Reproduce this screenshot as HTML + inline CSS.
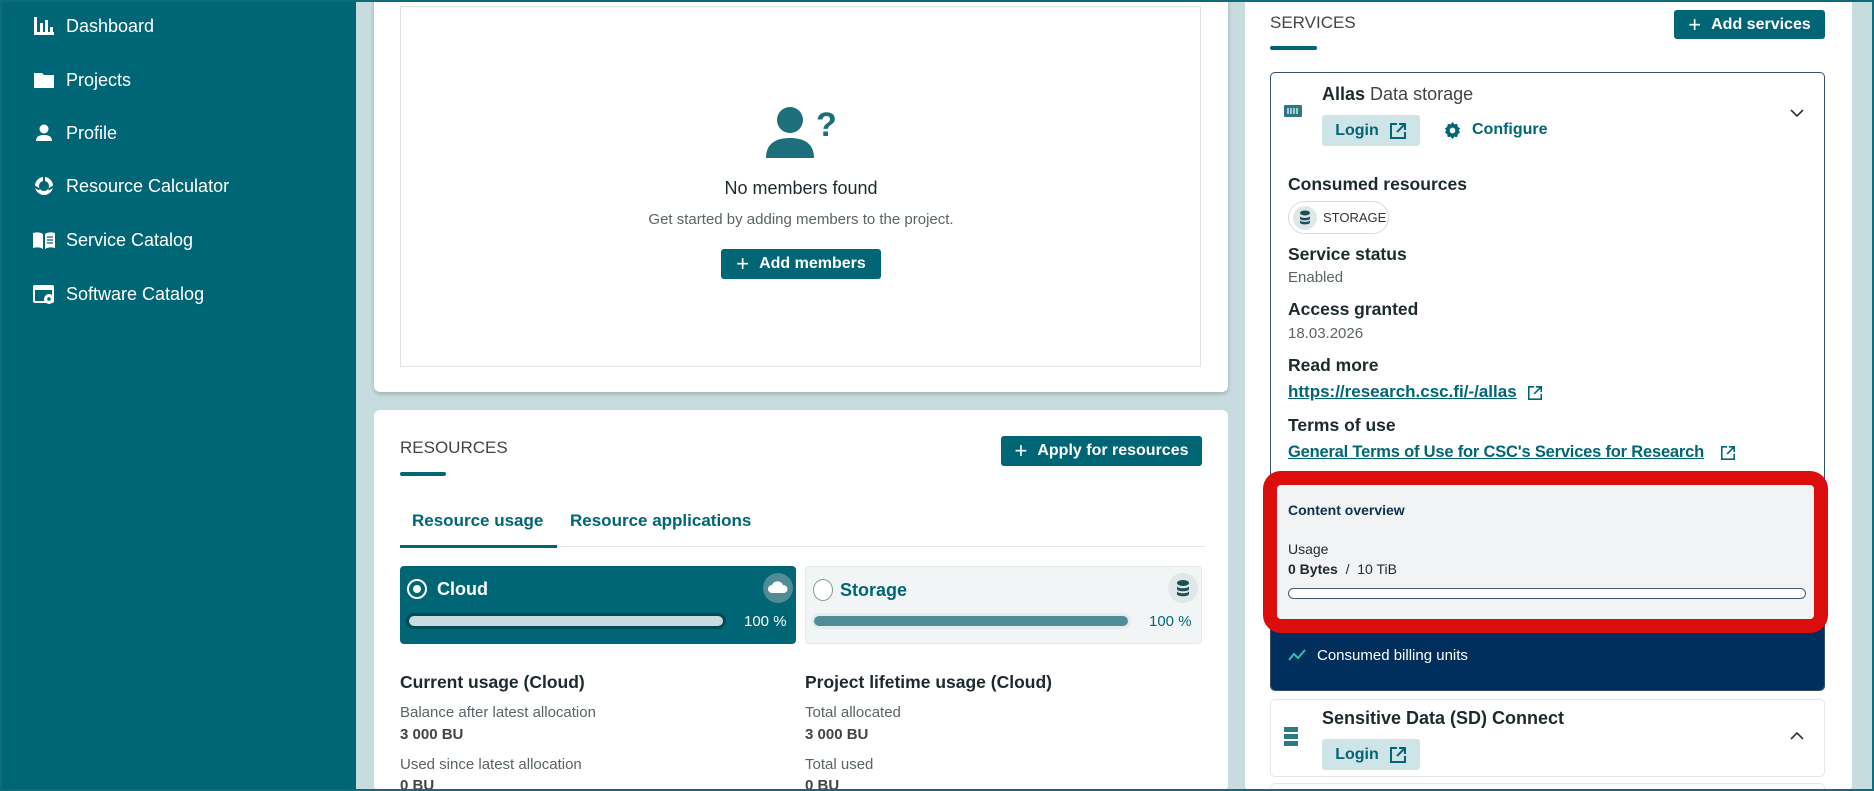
<!DOCTYPE html>
<html style="overflow:hidden;height:791px"><head><meta charset="utf-8"><style>
*{box-sizing:border-box;margin:0;padding:0}
body{width:1874px;height:791px;overflow:hidden;background:#c6dcdf;font-family:"Liberation Sans",sans-serif;position:relative;color:#1c2a2d}
.a{position:absolute}
.t{position:absolute;white-space:nowrap;line-height:20px}
#side{left:0;top:0;width:356px;height:791px;background:#006676}
.nav{position:absolute;left:32px;color:#fff;font-size:18px;display:flex;align-items:center;height:24px}
.nav svg{width:24px;height:22px;margin-right:10px;fill:#fff}
.card{position:absolute;background:#fff;border-radius:6px}
.btn{position:absolute;background:#006676;color:#fff;font-weight:bold;font-size:16px;border-radius:3px;display:flex;align-items:center;justify-content:center;gap:10px}
.btn b{font-size:22px;font-weight:normal;line-height:1}
.h{font-weight:bold;font-size:17.5px;color:#1c2a2d}
.g{font-size:15px;color:#5a6466}
.lk{font-size:17px;color:#006676;text-decoration:underline;font-weight:bold}
.login{position:absolute;background:#cfe4e7;color:#006676;font-weight:bold;font-size:16px;border-radius:3px;display:flex;align-items:center;justify-content:center;gap:10px}
</style></head><body>
<div class="a" style="left:0;top:0;width:1874px;height:791px;border:2px solid #0f6b77;z-index:50;pointer-events:none"></div>
<div id="side" class="a">
 <div class="nav" style="top:14px"><svg viewBox="0 0 24 22"><rect x="2" y="2" width="3" height="18"/><rect x="2" y="17" width="20" height="3"/><rect x="8" y="8" width="3" height="10"/><rect x="13" y="5" width="3" height="13"/><rect x="18" y="12" width="3" height="6"/></svg>Dashboard</div>
 <div class="nav" style="top:68px"><svg viewBox="0 0 24 22"><path d="M2 4h8l2 2h10v13H2z"/></svg>Projects</div>
 <div class="nav" style="top:121px"><svg viewBox="0 0 24 22"><circle cx="12" cy="7" r="4.5"/><path d="M4 19c0-5 4-6 8-6s8 1 8 6z"/></svg>Profile</div>
 <div class="nav" style="top:174px"><svg viewBox="0 0 24 22"><path d="M12 2a9 9 0 1 0 .01 0zm0 4a5 5 0 1 1-.01 0z"/><rect x="11" y="1" width="2" height="6" fill="#006676"/><rect x="2" y="12" width="6" height="2" fill="#006676" transform="rotate(30 5 13)"/><rect x="16" y="12" width="6" height="2" fill="#006676" transform="rotate(-30 19 13)"/></svg>Resource Calculator</div>
 <div class="nav" style="top:228px"><svg viewBox="0 0 24 22"><path d="M1 4c4-1 7-1 10 1v15c-3-2-6-2-10-1z"/><path d="M13 5c3-2 6-2 10-1v15c-4-1-7-1-10 1z"/><path d="M15 8h6M15 11h6M15 14h6" stroke="#006676" stroke-width="1.3"/></svg>Service Catalog</div>
 <div class="nav" style="top:282px"><svg viewBox="0 0 24 22"><rect x="1" y="2" width="21" height="18" rx="2"/><rect x="3" y="7" width="17" height="11" fill="#006676"/><circle cx="17" cy="16" r="5"/><circle cx="17" cy="16" r="1.8" fill="#006676"/></svg>Software Catalog</div>
</div>

<div class="card" style="left:374px;top:-6px;width:854px;height:398px;box-shadow:0 2px 4px rgba(0,0,0,.2)">
 <div class="a" style="left:26px;top:12px;width:801px;height:361px;border:1px solid #dfe3e4"></div>
 <svg class="a" style="left:390px;top:108px" width="76" height="56" viewBox="0 0 76 56"><circle cx="26" cy="18" r="13" fill="#1d6f7c"/><path d="M2 56c0-16 12-20 24-20s24 4 24 20z" fill="#1d6f7c"/><text x="52" y="34" font-size="34" font-weight="bold" fill="#1d6f7c" font-family="Liberation Sans">?</text></svg>
 <div class="t" style="left:0;width:854px;text-align:center;top:184px;font-size:18px">No members found</div>
 <div class="t" style="left:0;width:854px;text-align:center;top:216px;font-size:15px;color:#5a6466">Get started by adding members to the project.</div>
 <div class="btn" style="left:347px;top:255px;width:160px;height:30px"><b>+</b>Add members</div>
</div>

<div class="card" style="left:374px;top:410px;width:854px;height:381px">
 <div class="t" style="left:26px;top:28px;font-size:17px;color:#444">RESOURCES</div>
 <div class="a" style="left:26px;top:62px;width:46px;height:4px;border-radius:2px;background:#006676"></div>
 <div class="btn" style="left:627px;top:26px;width:201px;height:30px"><b>+</b>Apply for resources</div>
 <div class="t" style="left:38px;top:101px;font-size:17px;font-weight:bold;color:#006676">Resource usage</div>
 <div class="t" style="left:196px;top:101px;font-size:17px;font-weight:bold;color:#006676">Resource applications</div>
 <div class="a" style="left:26px;top:136px;width:805px;height:1px;background:#e1e5e6"></div>
 <div class="a" style="left:26px;top:135px;width:157px;height:3px;background:#006676"></div>
 <div class="a" style="left:26px;top:156px;width:396px;height:78px;background:#006676;border-radius:4px">
  <div class="a" style="left:7px;top:13px;width:20px;height:20px;border:2px solid #fff;border-radius:50%"><div class="a" style="left:4px;top:4px;width:8px;height:8px;background:#fff;border-radius:50%"></div></div>
  <div class="t" style="left:37px;top:13px;color:#fff;font-size:18px;font-weight:bold">Cloud</div>
  <div class="a" style="left:363px;top:7px;width:30px;height:30px;border-radius:50%;background:#4f8c96"><svg width="30" height="30" viewBox="0 0 30 30"><path d="M9 20a4 4 0 0 1 0-8 6 6 0 0 1 11 0 4 4 0 0 1 1 8z" fill="#fff"/></svg></div>
  <div class="a" style="left:6px;top:47px;width:320px;height:16px;border-radius:8px;background:#034a55"></div>
  <div class="a" style="left:9px;top:50px;width:314px;height:10px;border-radius:5px;background:#c8dcdf"></div>
  <div class="t" style="left:344px;top:46px;color:#fff;font-size:15px">100 %</div>
 </div>
 <div class="a" style="left:431px;top:156px;width:397px;height:78px;background:#f2f5f6;border:1px solid #e3e8e9;border-radius:4px">
  <div class="a" style="left:7px;top:12px;width:20px;height:22px;border:1px solid #8a9597;border-radius:50%;background:#fff"></div>
  <div class="t" style="left:34px;top:13px;color:#006676;font-size:18px;font-weight:bold">Storage</div>
  <div class="a" style="left:362px;top:6px;width:30px;height:30px;border-radius:50%;background:#dfe7e8"><svg width="30" height="30" viewBox="0 0 30 30"><ellipse cx="15" cy="10" rx="6" ry="3" fill="#1d4f57"/><path d="M9 13c0 3 12 3 12 0v3c0 3-12 3-12 0zM9 18c0 3 12 3 12 0v3c0 3-12 3-12 0z" fill="#1d4f57"/></svg></div>
  <div class="a" style="left:5px;top:46px;width:320px;height:16px;border-radius:8px;background:#e6ebec"></div>
  <div class="a" style="left:8px;top:49px;width:314px;height:10px;border-radius:5px;background:#4f8c96"></div>
  <div class="t" style="left:343px;top:45px;color:#006676;font-size:15px">100 %</div>
 </div>
 <div class="t h" style="left:26px;top:262px">Current usage (Cloud)</div>
 <div class="t h" style="left:431px;top:262px">Project lifetime usage (Cloud)</div>
 <div class="t g" style="left:26px;top:293px">Balance after latest allocation</div>
 <div class="t" style="left:26px;top:315px;font-size:15px;font-weight:bold;color:#444">3 000 BU</div>
 <div class="t g" style="left:26px;top:345px">Used since latest allocation</div>
 <div class="t" style="left:26px;top:366px;font-size:15px;font-weight:bold;color:#444">0 BU</div>
 <div class="t g" style="left:431px;top:293px">Total allocated</div>
 <div class="t" style="left:431px;top:315px;font-size:15px;font-weight:bold;color:#444">3 000 BU</div>
 <div class="t g" style="left:431px;top:345px">Total used</div>
 <div class="t" style="left:431px;top:366px;font-size:15px;font-weight:bold;color:#444">0 BU</div>
</div>

<div class="card" style="left:1245px;top:-6px;width:607px;height:797px;overflow:hidden">
 <div class="t" style="left:25px;top:19px;font-size:17px;color:#444">SERVICES</div>
 <div class="a" style="left:25px;top:52px;width:47px;height:4px;border-radius:2px;background:#006676"></div>
 <div class="btn" style="left:429px;top:16px;width:151px;height:29px"><b>+</b>Add services</div>
 <div class="a" style="left:25px;top:78px;width:555px;height:619px;border:1px solid #34506b;border-radius:5px;overflow:hidden">
  <svg class="a" style="left:12px;top:30px" width="20" height="16" viewBox="0 0 20 16"><rect x="1" y="2" width="18" height="12" rx="1" fill="#2a7a86"/><path d="M5 5v6M8 5v6M11 5v6M14 5v6" stroke="#fff" stroke-width="1.2"/></svg>
  <div class="t" style="left:51px;top:11px;font-size:18px"><b>Allas</b> <span style="color:#444">Data storage</span></div>
  <div class="login" style="left:51px;top:42px;width:98px;height:31px">Login <svg width="18" height="18" viewBox="0 0 18 18" fill="none" stroke="#006676" stroke-width="2"><path d="M8 2H2v14h14v-6M10 2h6v6M16 2L8 10"/></svg></div>
  <svg class="a" style="left:172px;top:48px" width="19" height="19" viewBox="0 0 20 20"><path d="M10 1l2 2.5 3-.5.5 3L18 8l-1.5 2L18 12l-2.5 2-.5 3-3-.5L10 19l-2-2.5-3 .5-.5-3L2 12l1.5-2L2 8l2.5-2 .5-3 3 .5z" fill="#006676"/><circle cx="10" cy="10" r="3" fill="#fff"/></svg>
  <div class="t" style="left:201px;top:47px;font-size:16px;font-weight:bold;color:#006676">Configure</div>
  <svg class="a" style="left:518px;top:34px" width="16" height="12" viewBox="0 0 16 12"><path d="M2 3l6 6 6-6" fill="none" stroke="#333" stroke-width="1.6"/></svg>
  <div class="t h" style="left:17px;top:101px">Consumed resources</div>
  <div class="a" style="left:17px;top:128px;width:101px;height:33px;border:1px solid #d6dcdd;border-radius:17px">
   <div class="a" style="left:4px;top:4px;width:24px;height:24px;border-radius:50%;background:#dfe7e8"><svg width="24" height="24" viewBox="0 0 24 24"><ellipse cx="12" cy="7" rx="5" ry="2.5" fill="#1d4f57"/><path d="M7 10c0 2.5 10 2.5 10 0v2.5c0 2.5-10 2.5-10 0zM7 14c0 2.5 10 2.5 10 0v2.5c0 2.5-10 2.5-10 0z" fill="#1d4f57"/></svg></div>
   <div class="t" style="left:34px;top:6px;font-size:13px;color:#333">STORAGE</div>
  </div>
  <div class="t h" style="left:17px;top:171px">Service status</div>
  <div class="t g" style="left:17px;top:195px">Enabled</div>
  <div class="t h" style="left:17px;top:226px">Access granted</div>
  <div class="t g" style="left:17px;top:251px">18.03.2026</div>
  <div class="t h" style="left:17px;top:282px">Read more</div>
  <div class="t lk" style="left:17px;top:309px">https://research.csc.fi/-/allas</div>
  <svg class="a" style="left:256px;top:312px" width="16" height="16" viewBox="0 0 18 18" fill="none" stroke="#006676" stroke-width="1.8"><path d="M8 2H2v14h14v-6M10 2h6v6M16 2L8 10"/></svg>
  <div class="t h" style="left:17px;top:342px">Terms of use</div>
  <div class="t lk" style="left:17px;top:369px;font-size:16.5px;letter-spacing:-0.2px">General Terms of Use for CSC's Services for Research</div>
  <svg class="a" style="left:449px;top:372px" width="16" height="16" viewBox="0 0 18 18" fill="none" stroke="#006676" stroke-width="1.8"><path d="M8 2H2v14h14v-6M10 2h6v6M16 2L8 10"/></svg>
  <div class="a" style="left:0;top:475px;width:555px;height:144px;background:#002f5d"></div>
  <svg class="a" style="left:17px;top:575px" width="20" height="14" viewBox="0 0 20 14"><path d="M1 12l5-6 4 4 7-8" fill="none" stroke="#2fc0a8" stroke-width="2"/></svg>
  <div class="t" style="left:46px;top:573px;font-size:15px;color:#fff">Consumed billing units</div>
 </div>
 <div class="a" style="left:18px;top:477px;width:565px;height:162px;border:14px solid #dc0d0d;border-radius:18px;background:#f2f3f5">
  <div class="t" style="left:11px;top:15px;font-size:14px;font-weight:bold;color:#0e2f4f">Content overview</div>
  <div class="t" style="left:11px;top:54px;font-size:14px;color:#1c2a2d">Usage</div>
  <div class="t" style="left:11px;top:74px;font-size:14px;color:#1c2a2d"><b>0 Bytes</b> &nbsp;/ &nbsp;10 TiB</div>
  <div class="a" style="left:11px;top:103px;width:518px;height:11px;border:1.5px solid #445a6a;border-radius:6px;background:#fff"></div>
 </div>
 <div class="a" style="left:25px;top:705px;width:555px;height:78px;border:1px solid #e3e7e8;border-radius:5px;background:#fff">
  <svg class="a" style="left:12px;top:26px" width="16" height="22" viewBox="0 0 16 22"><rect x="1" y="1" width="14" height="5" fill="#2a7a86"/><rect x="1" y="8" width="14" height="5" fill="#2a7a86"/><rect x="1" y="15" width="14" height="5" fill="#2a7a86"/></svg>
  <div class="t" style="left:51px;top:8px;font-size:18px;font-weight:bold">Sensitive Data (SD) Connect</div>
  <div class="login" style="left:51px;top:39px;width:98px;height:31px">Login <svg width="18" height="18" viewBox="0 0 18 18" fill="none" stroke="#006676" stroke-width="2"><path d="M8 2H2v14h14v-6M10 2h6v6M16 2L8 10"/></svg></div>
  <svg class="a" style="left:518px;top:30px" width="16" height="12" viewBox="0 0 16 12"><path d="M2 9l6-6 6 6" fill="none" stroke="#333" stroke-width="1.6"/></svg>
 </div>
 <div class="a" style="left:25px;top:789px;width:555px;height:30px;border:1px solid #e3e7e8;border-radius:5px"></div>
</div>
</body></html>
